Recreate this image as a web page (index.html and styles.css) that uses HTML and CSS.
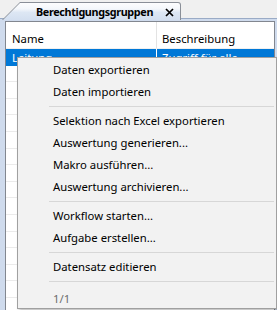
FILE: index.html
```html
<!DOCTYPE html>
<html lang="de">
<head>
    <meta charset="UTF-8">
    <meta name="viewport" content="width=device-width, initial-scale=1.0">
    <title>Berechtigungsgruppen</title>
    <link rel="stylesheet" href="styles.css">
</head>
<body>
    <div class="window">
        <div class="tabstrip">
            <div class="tab">
                <div class="tab-inner">
                    <span class="tab-title">Berechtigungsgruppen</span>
                    <svg class="tab-close" width="9" height="9" viewBox="0 0 9 9">
                        <path d="M1 1 L8 8 M8 1 L1 8" stroke="#000" stroke-width="1.7" fill="none"/>
                    </svg>
                </div>
            </div>
        </div>

        <div class="panel">
            <div class="grid">
                <div class="grid-head">
                    <div class="cell cell-name">Name</div>
                    <div class="cell cell-desc">Beschreibung</div>
                </div>
                <div class="row selected">
                    <div class="cell cell-name">Leitung</div>
                    <div class="cell cell-desc">Zugriff für alle</div>
                </div>
                <div class="row"></div>
                <div class="row"></div>
                <div class="row"></div>
                <div class="row"></div>
                <div class="row"></div>
                <div class="row"></div>
                <div class="row"></div>
                <div class="row"></div>
                <div class="row"></div>
                <div class="row"></div>
                <div class="row"></div>
                <div class="row"></div>
                <div class="row"></div>
                <div class="row"></div>
            </div>
        </div>

        <div class="context-menu">
            <div class="menu-item">Daten exportieren</div>
            <div class="menu-item">Daten importieren</div>
            <div class="menu-sep"></div>
            <div class="menu-item">Selektion nach Excel exportieren</div>
            <div class="menu-item">Auswertung generieren...</div>
            <div class="menu-item">Makro ausführen...</div>
            <div class="menu-item">Auswertung archivieren...</div>
            <div class="menu-sep"></div>
            <div class="menu-item">Workflow starten...</div>
            <div class="menu-item">Aufgabe erstellen...</div>
            <div class="menu-sep"></div>
            <div class="menu-item">Datensatz editieren</div>
            <div class="menu-sep"></div>
            <div class="menu-item menu-footer">1/1</div>
        </div>
    </div>
</body>
</html>
```

FILE: styles.css
```css
* {
    margin: 0;
    padding: 0;
    box-sizing: border-box;
}

body {
    width: 277px;
    height: 310px;
    overflow: hidden;
    background: #f0f0f0;
    font-family: 'Noto Sans', 'Open Sans', sans-serif;
    font-size: 11.3px;
    color: #000;
}

.window {
    position: relative;
    height: 310px;
    display: flex;
    flex-direction: column;
}

/* tab strip */
.tabstrip {
    height: 19px;
    padding-top: 2px;
    padding-left: 2px;
    border-bottom: 1px solid #9aabc6;
    display: flex;
}

.tab {
    position: relative;
    z-index: 1;
    width: 179px;
    height: 18px;
    background: #8a8f98;
    border-top-right-radius: 3px;
    clip-path: polygon(0 100%, 18px 0, 100% 0, 100% 100%);
}

.tab-inner {
    height: 17px;
    margin: 1px 1px 0 1px;
    padding-left: 33px;
    display: flex;
    align-items: center;
    border-top-right-radius: 2px;
    background: linear-gradient(#fdfdfe 0%, #f4f7fb 35%, #dde7f4 55%, #d3dff0 100%);
    clip-path: polygon(0 100%, 17px 0, 100% 0, 100% 100%);
}

.tab-title {
    font-size: 10.8px;
    font-weight: bold;
    line-height: 16px;
    letter-spacing: -0.35px;
}

.tab-close {
    margin-left: 12px;
    margin-top: 2px;
    flex-shrink: 0;
}

/* grid panel */
.panel {
    flex: 1;
    background: #cfdbed;
    padding: 2px 2px 0 5px;
    display: flex;
}

.grid {
    flex: 1;
    background: #fff;
    border: 1px solid #828790;
    border-bottom: none;
    overflow: hidden;
}

.grid-head {
    height: 27px;
    display: flex;
    border-bottom: 1px solid #f0f0f0;
}

.grid-head .cell {
    padding-top: 9px;
    line-height: 16px;
}

.cell {
    white-space: nowrap;
}

.cell-name {
    width: 151px;
    padding-left: 6px;
    border-right: 1px solid #e3e3e3;
}

.cell-desc {
    flex: 1;
    padding-left: 5px;
}

.row {
    height: 16.6px;
    display: flex;
    border-bottom: 1px solid #ebebeb;
}

.row.selected {
    background: #0078d7;
    color: #fff;
    border-bottom: none;
}

.row.selected .cell {
    line-height: 17px;
    border-right-color: #fff;
}

/* context menu */
.context-menu {
    position: absolute;
    left: 17px;
    top: 57px;
    width: 260px;
    height: 252px;
    padding: 1px 1px 0 1px;
    background: #f2f2f2;
    border: 1px solid #a0a0a0;
    box-shadow: 2px 2px 3px rgba(0, 0, 0, 0.25);
    z-index: 5;
}

.menu-item {
    height: 22px;
    line-height: 22px;
    padding-left: 34px;
    white-space: nowrap;
}

.menu-sep {
    height: 7px;
    margin: 0 1px 0 30px;
    border-top: 3px solid transparent;
    border-bottom: 3px solid transparent;
    background: #d7d7d7;
    background-clip: padding-box;
}

.menu-footer {
    padding-top: 6px;
    line-height: 16px;
    color: #6d6d6d;
}
```
